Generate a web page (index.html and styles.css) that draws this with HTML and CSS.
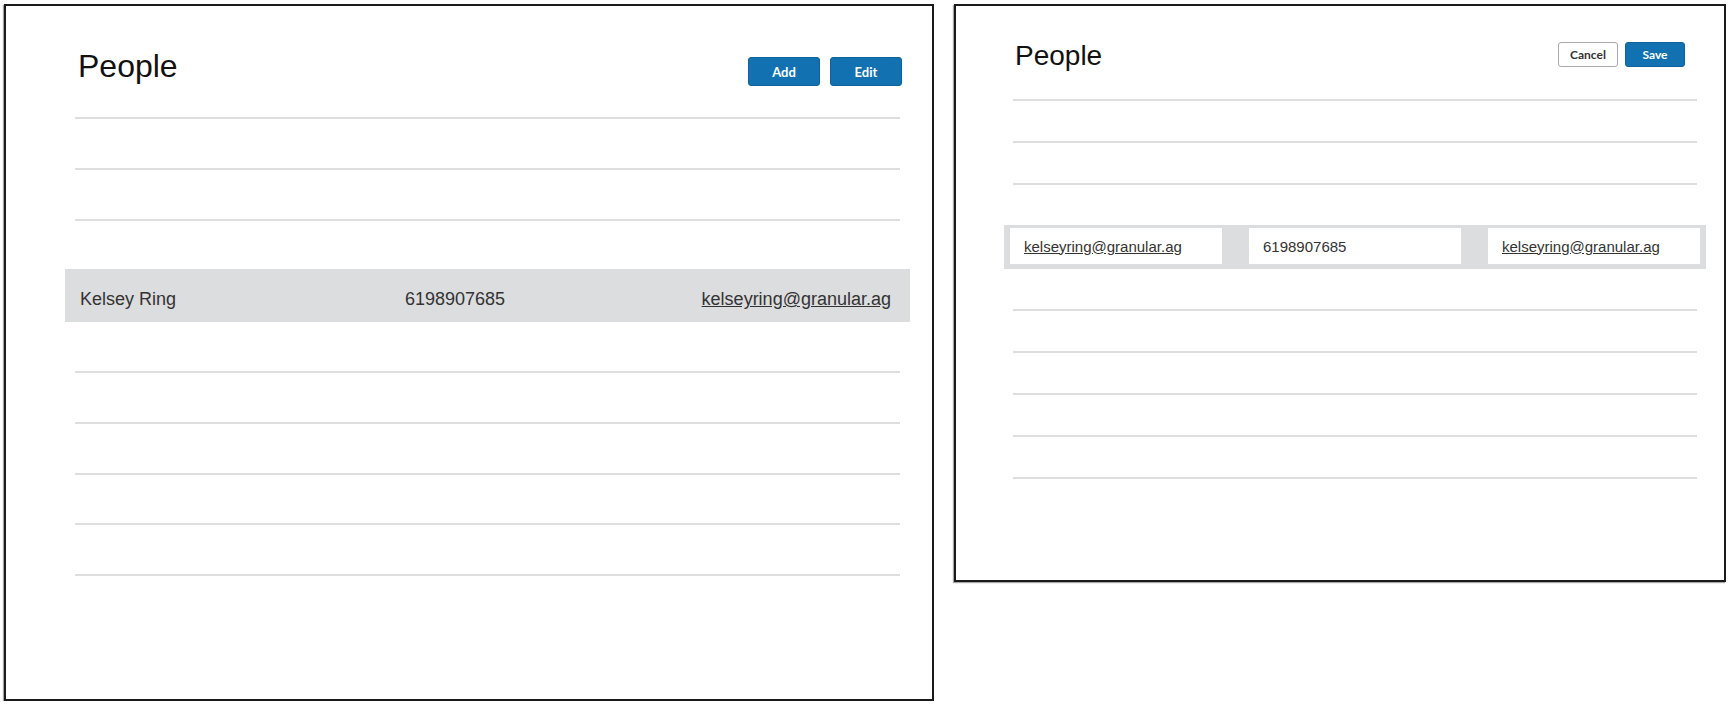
FILE: index.html
```html
<!DOCTYPE html>
<html>
<head>
    <title>People</title>
    <link rel="stylesheet" href="styles.css">
</head>
<body>
    <div class="screens">
        <!-- view mode -->
        <div class="panel panel-view">
            <div class="panel-header">
                <h1>People</h1>
                <div class="actions">
                    <button class="btn btn-primary">Add</button>
                    <button class="btn btn-primary">Edit</button>
                </div>
            </div>

            <div class="people-list">
                <div class="row"></div>
                <div class="row"></div>
                <div class="row"></div>
                <div class="row row-selected">
                    <span class="name">Kelsey Ring</span>
                    <span class="phone">6198907685</span>
                    <a class="email" href="#">kelseyring@granular.ag</a>
                </div>
                <div class="row"></div>
                <div class="row"></div>
                <div class="row"></div>
                <div class="row"></div>
                <div class="row"></div>
            </div>
        </div>

        <!-- edit mode -->
        <div class="panel panel-edit">
            <div class="panel-header">
                <h1>People</h1>
                <div class="actions">
                    <button class="btn btn-default">Cancel</button>
                    <button class="btn btn-primary">Save</button>
                </div>
            </div>

            <div class="people-list">
                <div class="row"></div>
                <div class="row"></div>
                <div class="row"></div>
                <div class="row row-editing">
                    <div class="field"><a href="#">kelseyring@granular.ag</a></div>
                    <div class="field">6198907685</div>
                    <div class="field"><a href="#">kelseyring@granular.ag</a></div>
                </div>
                <div class="row"></div>
                <div class="row"></div>
                <div class="row"></div>
                <div class="row"></div>
                <div class="row"></div>
            </div>
        </div>
    </div>
</body>
</html>
```

FILE: styles.css
```css
body {
    margin: 0;
    padding: 0;
    background-color: #fff;
    font-family: "Liberation Sans", Arial, sans-serif;
    color: #333;
}

.screens {
    display: flex;
    align-items: flex-start;
    gap: 20px;
    padding: 4px 0 0 4px;
}

.panel {
    box-sizing: border-box;
    border: 2px solid #1a1a1a;
    box-shadow: -1px 1px 1px rgba(0, 0, 0, 0.35);
    background-color: #fff;
}

.panel-view {
    width: 930px;
    height: 697px;
    padding: 44px 32px 0 69px;
}

.panel-edit {
    width: 772px;
    height: 578px;
    padding: 35px 27px 0 57px;
}

.panel-header {
    display: flex;
    justify-content: space-between;
    align-items: flex-start;
}

h1 {
    margin: 0;
    font-weight: normal;
    color: #111;
    line-height: 1;
}

.panel-view h1 {
    font-size: 32px;
    margin-left: 3px;
}

.panel-edit h1 {
    font-size: 28px;
    margin-top: 1px;
    margin-left: 2px;
}

.actions {
    display: flex;
}

.btn {
    font-family: Lato, "Liberation Sans", sans-serif;
    font-weight: bold;
    cursor: pointer;
    box-sizing: border-box;
    border-radius: 3px;
    padding: 0;
}

.btn-primary {
    background-color: #1271b0;
    border: 1px solid #0f629a;
    color: #fff;
}

.btn-default {
    background-color: #fff;
    border: 1px solid #a9a9a9;
    color: #333;
}

.panel-view .actions {
    gap: 10px;
    margin-top: 7px;
    margin-right: -2px;
}

.panel-view .btn {
    width: 72px;
    height: 29px;
    font-size: 13px;
}

.panel-edit .actions {
    gap: 7px;
    margin-top: 1px;
    margin-right: 12px;
}

.panel-edit .btn {
    width: 60px;
    height: 25px;
    font-size: 12px;
}

.people-list {
    border-top: 2px solid #dedede;
}

.panel-view .people-list {
    margin-top: 31px;
}

.panel-edit .people-list {
    margin-top: 29px;
}

.row {
    box-sizing: border-box;
    border-bottom: 2px solid #dedede;
}

.panel-view .row {
    height: 50.8px;
}

.panel-edit .row {
    height: 42px;
}

/* selected person, read only */
.panel-view .row-selected {
    display: grid;
    grid-template-columns: 325px 1fr auto;
    align-items: center;
    height: 52.8px;
    margin: -2px -10px 0;
    padding: 10px 19px 0 15px;
    background-color: #dcdddf;
    border-bottom-color: #dcdddf;
    font-size: 18px;
    color: #333;
}

.row-selected .email,
.field a {
    color: #333;
    text-decoration: underline;
}

/* selected person, editing */
.panel-edit .row-editing {
    display: flex;
    gap: 27px;
    height: 44px;
    margin: -2px -9px 0;
    padding: 3px 6px 0;
    background-color: #dcdddf;
    border-bottom-color: #dcdddf;
}

.field {
    box-sizing: border-box;
    width: 213px;
    height: 36px;
    padding-left: 14px;
    display: flex;
    align-items: center;
    background-color: #fff;
    font-size: 15px;
    color: #333;
}
```
